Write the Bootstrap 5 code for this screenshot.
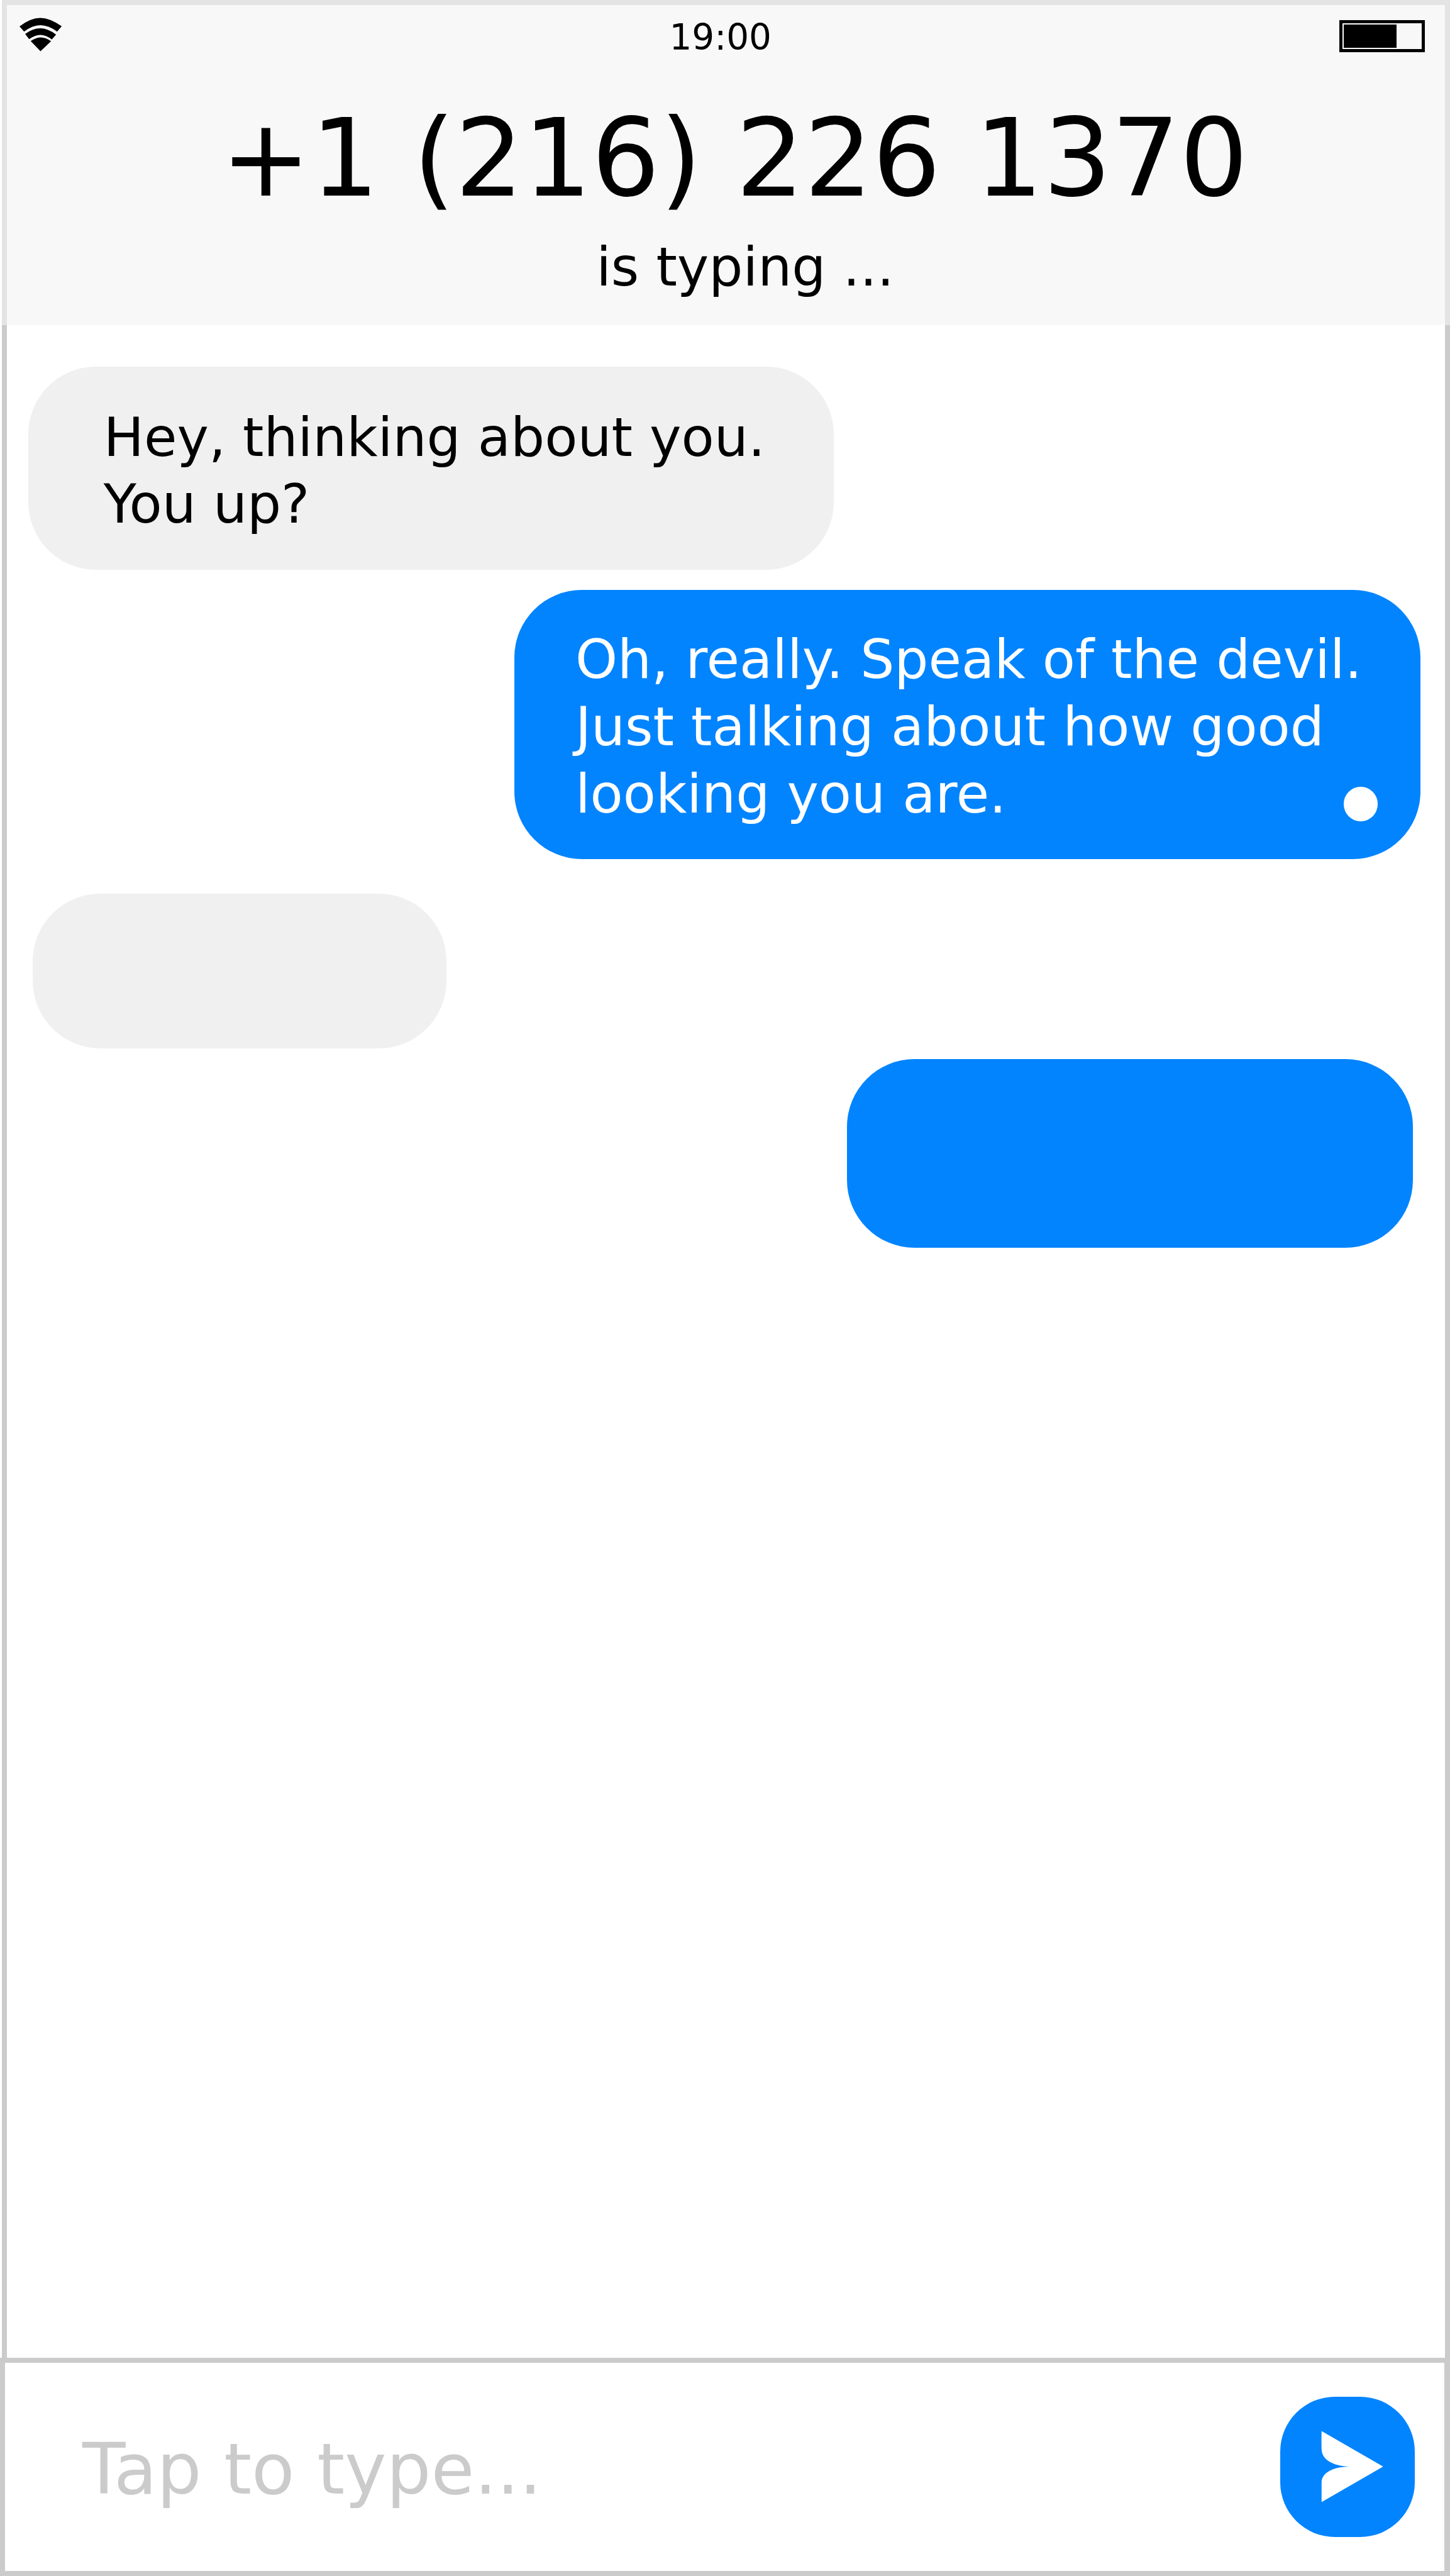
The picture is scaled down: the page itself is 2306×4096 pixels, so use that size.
<!DOCTYPE html>
<html lang="en">
<head>
<meta charset="utf-8">
<meta name="viewport" content="width=device-width, initial-scale=1">
<title>Messages</title>
<link href="https://cdn.jsdelivr.net/npm/bootstrap@5.3.0/dist/css/bootstrap.min.css" rel="stylesheet">
<style>
  body { font-family: "DejaVu Sans", sans-serif; font-size: 85.3px; line-height: 106.6px; color: #000; background: #fff; }
  .phone { height: 4096px; overflow: hidden; }
  .phone-header { height: 517px; margin-left: 3px; background: #f8f8f8; border: solid #e4e4e4; border-width: 8px 8px 0 8px; }
  .status-bar { height: 96px; padding: 0 32.3px 0 17.5px; }
  .status-side { flex: 1 1 0; }
  .clock { font-size: 56.4px; line-height: 60px; padding-top: 22px; margin-left: -2.8px; }
  .wifi-icon { width: 67.5px; height: 54px; margin-top: 20px; display: block; }
  .battery { width: 135.5px; height: 51.3px; border: 5.6px solid #000; margin-top: 24px; padding: 2.2px; }
  .battery-level { width: 83.4px; height: 100%; background: #000; }
  .caller { font-size: 170.7px; line-height: 200px; padding: 48px 0 0 27px; }
  .typing { line-height: 106px; padding: 20px 0 0 61px; }
  .chat-body { margin-left: 3px; border: solid #cbcbcb; border-width: 0 8px; padding: 65.8px 39px 0 33.6px; }
  .bubble { border-radius: 107.5px; }
  .bubble-in { background: #f0f0f0; }
  .bubble-out { background: #0284ff; color: #fff; }
  .b-one { width: 1281.8px; height: 323.2px; padding: 60px 0 0 120.2px; }
  .b-two { width: 1441.1px; height: 427.9px; margin-top: 32.4px; padding: 58px 0 0 97px; position: relative; }
  .b-three { width: 658.5px; height: 246.6px; margin: 54.4px 0 0 7.4px; }
  .b-four { width: 900.1px; height: 300.1px; margin: 17px 11.7px 0 0; }
  .status-dot { position: absolute; right: 67.9px; bottom: 60.5px; width: 54.4px; height: 54.4px; border-radius: 50%; background: #fff; }
  .composer { height: 347.5px; border: 8px solid #cbcbcb; border-right-width: 9px; padding: 0 47.5px 0 123px; }
  .composer-hint { font-size: 112px; line-height: 130px; color: #cbcbcb; padding-top: 7px; }
  .send-btn { width: 213.2px; height: 223px; border-radius: 87px; background: #0284ff; border: 0; margin-top: 1px; }
  .send-btn svg { width: 100%; height: 100%; display: block; }
</style>
</head>
<body>
<div class="phone d-flex flex-column">
  <header class="phone-header flex-shrink-0">
    <div class="status-bar d-flex align-items-start">
      <div class="status-side">
        <svg class="wifi-icon" viewBox="52 51 123 98.4" preserveAspectRatio="none" overflow="visible" aria-hidden="true">
          <path d="M55.7 76.500Q88 52 116 52Q143 52 178 76L164.700 91.500Q139 73 116 73Q94 73 69 91.500ZM72 98.500Q94 82 116 82Q137 82 161.700 100L149.300 114.500Q132 101.300 116 101.300Q101 101.300 83.500 113.500ZM88 119Q104 108.500 117.500 108.500Q132 108.500 147.300 119.500L116.500 148.500Z"/>
        </svg>
      </div>
      <div class="clock">19:00</div>
      <div class="status-side d-flex justify-content-end"><div class="battery"><div class="battery-level"></div></div></div>
    </div>
    <h1 class="caller text-center fw-normal m-0 text-nowrap">+1 (216) 226 1370</h1>
    <div class="typing text-center">is typing ...</div>
  </header>
  <main class="chat-body flex-grow-1 d-flex flex-column">
    <div class="bubble bubble-in b-one align-self-start text-nowrap">Hey, thinking about you.<br>You up?</div>
    <div class="bubble bubble-out b-two align-self-end text-nowrap">Oh, really. Speak of the devil.<br>Just talking about how good<br>looking you are.<span class="status-dot"></span></div>
    <div class="bubble bubble-in b-three align-self-start"></div>
    <div class="bubble bubble-out b-four align-self-end"></div>
  </main>
  <footer class="composer flex-shrink-0 d-flex align-items-center justify-content-between">
    <div class="composer-hint">Tap to type...</div>
    <button class="send-btn p-0" type="button" aria-label="Send">
      <svg viewBox="0 0 388.9 406.7" aria-hidden="true"><path fill="#fff" d="M120 99.300L298.600 202.600L120 305.400V247.400C121 222 150 203.500 201.400 202.600C150 201 121 181 120 152.900Q119.200 130 120 99.300Z"/></svg>
    </button>
  </footer>
</div>
<script src="https://cdn.jsdelivr.net/npm/bootstrap@5.3.0/dist/js/bootstrap.bundle.min.js"></script>
</body>
</html>
